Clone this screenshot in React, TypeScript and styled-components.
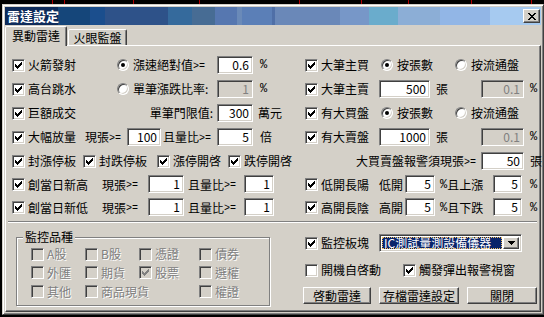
import React from "react";
import styled, { createGlobalStyle, css } from "styled-components";

const FACE = "#d4d0c8";
const SHADOW = "#808080";
const DARK = "#404040";

const ticks = [52, 64, 133, 199, 299, 361, 408, 471, 531];

const GlobalStyle = createGlobalStyle`
  html, body { margin: 0; padding: 0; }
  body {
    width: 544px;
    height: 317px;
    overflow: hidden;
    box-sizing: border-box;
    padding: 4px 0 0 2px;
    background-color: #000;
    background-image: ${ticks.map(() => "linear-gradient(#b00000, #b00000)").join(", ")};
    background-size: 1px 4px;
    background-repeat: no-repeat;
    background-position: ${ticks.map((x) => `${x}px 0`).join(", ")};
    font-family: "Noto Sans CJK TC", "Liberation Sans", sans-serif;
    font-size: 12px;
    line-height: 14px;
    color: #000;
  }
`;

const sunken = css`
  border-style: solid;
  border-width: 1px;
  border-color: ${SHADOW} #fff #fff ${SHADOW};
  box-shadow: inset 1px 1px 0 ${DARK}, inset -1px -1px 0 ${FACE};
`;

const raised = css`
  border-style: solid;
  border-width: 1px;
  border-color: #fff ${DARK} ${DARK} #fff;
  box-shadow: inset -1px -1px 0 ${SHADOW};
`;

const Window = styled.div`
  width: 542px;
  height: 311px;
  box-sizing: border-box;
  background: ${FACE};
  border: 1px solid;
  border-color: ${FACE} ${DARK} ${DARK} ${FACE};
  box-shadow: inset 1px 1px 0 #fff, inset -1px -1px 0 ${SHADOW};
  padding: 2px;
  display: flex;
  flex-direction: column;
`;

const TitleBar = styled.div`
  height: 18px;
  flex-shrink: 0;
  display: flex;
  align-items: center;
  justify-content: space-between;
  padding: 0 1px 0 2px;
  background: linear-gradient(
    to right,
    #0e2b5a 0 53px,
    #15467a 53px 85px,
    #1b4e8d 85px 100px,
    #2e5289 100px 163px,
    #356a9c 163px 187px,
    #476c94 187px 210px,
    #5677b0 210px 232px,
    #6a8ab8 232px 237px,
    #5b7fb7 237px 267px,
    #4f6fa7 267px 270px,
    #6a88b8 270px 335px,
    #7797c8 335px 364px,
    #6aaccc 364px 393px,
    #8caed6 393px 435px,
    #92b6e6 435px 485px,
    #a6caf0 485px
  );
`;

const TitleText = styled.span`
  color: #fff;
  font-weight: bold;
  font-size: 13px;
  line-height: 16px;
`;

const CloseButton = styled.div`
  width: 17px;
  height: 14px;
  box-sizing: border-box;
  background: ${FACE};
  ${raised};
  display: flex;
  align-items: center;
  justify-content: center;
`;

const TabStrip = styled.div`
  height: 20px;
  flex-shrink: 0;
  display: flex;
  align-items: flex-end;
`;

const Tab = styled.div<{ $active?: boolean }>`
  position: relative;
  z-index: 1;
  box-sizing: border-box;
  display: flex;
  align-items: center;
  justify-content: center;
  background: ${FACE};
  border-style: solid;
  border-width: 1px 1px 0 1px;
  border-color: #fff ${DARK} transparent #fff;
  border-radius: 2px 2px 0 0;
  box-shadow: inset -1px 0 0 ${SHADOW};
  width: ${(p) => (p.$active ? 62 : 59)}px;
  height: ${(p) => (p.$active ? 20 : 16)}px;
  margin-bottom: ${(p) => (p.$active ? -1 : 0)}px;
  margin-left: ${(p) => (p.$active ? 0 : 1)}px;
  padding-bottom: ${(p) => (p.$active ? 1 : 0)}px;
`;

const Panel = styled.div`
  flex: 1;
  box-sizing: border-box;
  border-style: solid;
  border-width: 1px;
  border-color: #fff ${DARK} ${DARK} #fff;
  box-shadow: inset -1px -1px 0 ${SHADOW};
  padding: 7px 2px 0 6px;
  display: flex;
  flex-direction: column;
`;

const TopGrid = styled.div`
  display: grid;
  grid-template-columns: 293px 1fr;
  grid-template-rows: 24px 24px 24px 24px 24px 23px 23px;
`;

const Row = styled.div`
  display: flex;
  align-items: center;
  white-space: nowrap;
`;

const Cell = styled.div<{ $w?: number; $end?: boolean; $pl?: number; $pr?: number; $ml?: number }>`
  display: flex;
  align-items: center;
  flex-shrink: 0;
  box-sizing: border-box;
  white-space: nowrap;
  ${(p) => (p.$w !== undefined ? `width: ${p.$w}px;` : "")}
  justify-content: ${(p) => (p.$end ? "flex-end" : "flex-start")};
  padding-left: ${(p) => p.$pl ?? 0}px;
  padding-right: ${(p) => p.$pr ?? 0}px;
  margin-left: ${(p) => p.$ml ?? 0}px;
`;

const Ascii = styled.span<{ $small?: boolean }>`
  font-family: "Liberation Mono", monospace;
  font-size: ${(p) => (p.$small ? 10 : 12)}px;
  padding-top: ${(p) => (p.$small ? 3 : 0)}px;
`;

const Label = styled.span<{ $disabled?: boolean }>`
  margin-left: 3px;
  color: ${(p) => (p.$disabled ? SHADOW : "#000")};
  text-shadow: ${(p) => (p.$disabled ? "1px 1px 0 #fff" : "none")};
`;

const Box = styled.span<{ $disabled?: boolean }>`
  width: 13px;
  height: 13px;
  flex-shrink: 0;
  box-sizing: border-box;
  ${sunken};
  background: ${(p) => (p.$disabled ? FACE : "#fff")};
  display: flex;
  align-items: center;
  justify-content: center;
`;

const RadioRing = styled.span<{ $on?: boolean }>`
  width: 12px;
  height: 12px;
  flex-shrink: 0;
  box-sizing: border-box;
  border-radius: 50%;
  ${sunken};
  background: #fff;
  display: flex;
  align-items: center;
  justify-content: center;
  &::after {
    content: "";
    width: 4px;
    height: 4px;
    border-radius: 50%;
    background: ${(p) => (p.$on ? "#000" : "transparent")};
  }
`;

const RadioLabel = styled.span`
  margin-left: 4px;
  display: flex;
  align-items: center;
`;

const TextBox = styled.div<{ $w: number; $disabled?: boolean }>`
  width: ${(p) => p.$w}px;
  height: 18px;
  box-sizing: border-box;
  flex-shrink: 0;
  ${sunken};
  background: ${(p) => (p.$disabled ? FACE : "#fff")};
  color: ${(p) => (p.$disabled ? SHADOW : "#000")};
  display: flex;
  align-items: center;
  justify-content: flex-end;
  padding-right: 3px;
  margin-top: -1px;
`;

const Separator = styled.div`
  height: 0;
  margin: 2px 1px 0 -4px;
  border-top: 1px solid ${SHADOW};
  border-bottom: 1px solid #fff;
`;

const Bottom = styled.div`
  display: flex;
  align-items: flex-start;
`;

const Group = styled.fieldset`
  margin: 7px 0 0 4px;
  padding: 0 0 0 14px;
  width: 254px;
  height: 76px;
  box-sizing: border-box;
  border: 1px solid ${SHADOW};
  box-shadow: inset 1px 1px 0 #fff, 1px 1px 0 #fff;
  min-width: 0;
`;

const Legend = styled.legend`
  margin-left: -8px;
  padding: 0 2px;
  background: ${FACE};
  line-height: 14px;
`;

const Kinds = styled.div`
  display: grid;
  grid-template-columns: 54px 54px 60px auto;
  grid-template-rows: 18px 19px 19px;
  margin-top: 1px;
`;

const RightCol = styled.div`
  margin: 11px 0 0 33px;
  display: flex;
  flex-direction: column;
`;

const Select = styled.div`
  width: 143px;
  height: 18px;
  box-sizing: border-box;
  ${sunken};
  background: #fff;
  display: flex;
  align-items: stretch;
  padding: 2px;
`;

const Selected = styled.div`
  flex: 1;
  background: #0a246a;
  color: #fff;
  outline: 1px dotted #f0c060;
  outline-offset: -1px;
  display: flex;
  align-items: center;
  padding-left: 2px;
  margin-right: 1px;
`;

const DropButton = styled.div`
  width: 16px;
  box-sizing: border-box;
  background: ${FACE};
  ${raised};
  display: flex;
  align-items: center;
  justify-content: center;
`;

const ButtonRow = styled.div`
  display: flex;
  gap: 8px;
  margin-top: 8px;
`;

const Button = styled.div<{ $w: number }>`
  width: ${(p) => p.$w}px;
  height: 17px;
  box-sizing: border-box;
  background: ${FACE};
  ${raised};
  display: flex;
  align-items: center;
  justify-content: center;
`;

const TickMark = ({ color }: { color: string }) => (
  <svg width="7" height="7" viewBox="0 0 7 7" shapeRendering="crispEdges">
    <path
      fill={color}
      d="M0 2h1v3H0z M1 3h1v3H1z M2 4h1v3H2z M3 3h1v3H3z M4 2h1v3H4z M5 1h1v3H5z M6 0h1v3H6z"
    />
  </svg>
);

type CheckProps = { label?: string; checked?: boolean; disabled?: boolean; w?: number };

const Check = ({ label, checked, disabled, w }: CheckProps) => (
  <Cell $w={w}>
    <Box $disabled={disabled}>{checked && <TickMark color={disabled ? SHADOW : "#000"} />}</Box>
    {label && <Label $disabled={disabled}>{label}</Label>}
  </Cell>
);

const Radio = ({ label, on, w }: { label: React.ReactNode; on?: boolean; w?: number }) => (
  <Cell $w={w}>
    <RadioRing $on={on} />
    <RadioLabel>{label}</RadioLabel>
  </Cell>
);

const Ge = () => <Ascii $small>&gt;=</Ascii>;
const Pct = () => <Ascii>%</Ascii>;

const App: React.FC = () => {
  return (
    <>
      <GlobalStyle />
      <Window>
        <TitleBar>
          <TitleText>雷達設定</TitleText>
          <CloseButton>
            <svg width="8" height="7" viewBox="0 0 8 7" shapeRendering="crispEdges">
              <path d="M0 0h2v1H0z M6 0h2v1H6z M1 1h2v1H1z M5 1h2v1H5z M2 2h4v1H2z M3 3h2v1H3z M2 4h4v1H2z M1 5h2v1H1z M5 5h2v1H5z M0 6h2v1H0z M6 6h2v1H6z" />
            </svg>
          </CloseButton>
        </TitleBar>
        <TabStrip>
          <Tab $active>異動雷達</Tab>
          <Tab>火眼監盤</Tab>
        </TabStrip>
        <Panel>
          <TopGrid>
            <Row>
              <Check w={105} label="火箭發射" checked />
              <Radio w={100} label={<>漲速絕對值<Ge /></>} on />
              <TextBox $w={36}>0.6</TextBox>
              <Cell $ml={7}><Pct /></Cell>
            </Row>
            <Row>
              <Check w={76} label="大筆主買" checked />
              <Radio w={74} label="按張數" on />
              <Radio label="按流通盤" />
            </Row>

            <Row>
              <Check w={105} label="高台跳水" checked />
              <Radio w={100} label="單筆漲跌比率:" />
              <TextBox $w={36} $disabled>1</TextBox>
              <Cell $ml={7}><Pct /></Cell>
            </Row>
            <Row>
              <Check w={74} label="大筆主賣" checked />
              <TextBox $w={51}>500</TextBox>
              <Cell $w={51} $pl={6}>張</Cell>
              <TextBox $w={43} $disabled>0.1</TextBox>
              <Cell $ml={6}><Pct /></Cell>
            </Row>

            <Row>
              <Check w={105} label="巨額成交" checked />
              <Cell $w={100} $end $pr={4}>單筆門限值:</Cell>
              <TextBox $w={36}>300</TextBox>
              <Cell $ml={5}>萬元</Cell>
            </Row>
            <Row>
              <Check w={76} label="有大買盤" checked />
              <Radio w={74} label="按張數" on />
              <Radio label="按流通盤" />
            </Row>

            <Row>
              <Check w={73} label="大幅放量" checked />
              <Cell $w={42}>現張<Ge /></Cell>
              <TextBox $w={34}>100</TextBox>
              <Cell $w={54} $ml={2}>且量比<Ge /></Cell>
              <TextBox $w={36}>5</TextBox>
              <Cell $ml={7}>倍</Cell>
            </Row>
            <Row>
              <Check w={74} label="有大賣盤" checked />
              <TextBox $w={51}>1000</TextBox>
              <Cell $w={51} $pl={6}>張</Cell>
              <TextBox $w={43} $disabled>0.1</TextBox>
              <Cell $ml={6}><Pct /></Cell>
            </Row>

            <Row>
              <Check w={71} label="封漲停板" checked />
              <Check w={74} label="封跌停板" checked />
              <Check w={71} label="漲停開啓" checked />
              <Check label="跌停開啓" checked />
            </Row>
            <Row>
              <Cell $w={176} $end $pr={5}>大買賣盤報警須現張<Ge /></Cell>
              <TextBox $w={43}>50</TextBox>
              <Cell $ml={6}>張</Cell>
            </Row>

            <Row>
              <Check w={90} label="創當日新高" checked />
              <Cell $w={46}>現張<Ge /></Cell>
              <TextBox $w={36}>1</TextBox>
              <Cell $w={56} $ml={4}>且量比<Ge /></Cell>
              <TextBox $w={30}>1</TextBox>
            </Row>
            <Row>
              <Check w={74} label="低開長陽" checked />
              <Cell $w={26}>低開</Cell>
              <TextBox $w={30}>5</TextBox>
              <Cell $w={58} $pl={5}><Pct />且上漲</Cell>
              <TextBox $w={29}>5</TextBox>
              <Cell $ml={8}><Pct /></Cell>
            </Row>

            <Row>
              <Check w={90} label="創當日新低" checked />
              <Cell $w={46}>現張<Ge /></Cell>
              <TextBox $w={36}>1</TextBox>
              <Cell $w={56} $ml={4}>且量比<Ge /></Cell>
              <TextBox $w={30}>1</TextBox>
            </Row>
            <Row>
              <Check w={74} label="高開長陰" checked />
              <Cell $w={26}>高開</Cell>
              <TextBox $w={30}>5</TextBox>
              <Cell $w={58} $pl={5}><Pct />且下跌</Cell>
              <TextBox $w={29}>5</TextBox>
              <Cell $ml={8}><Pct /></Cell>
            </Row>
          </TopGrid>

          <Separator />

          <Bottom>
            <Group>
              <Legend>監控品種</Legend>
              <Kinds>
                <Check label="A股" disabled />
                <Check label="B股" disabled />
                <Check label="憑證" disabled />
                <Check label="債券" disabled />
                <Check label="外匯" disabled />
                <Check label="期貨" disabled />
                <Check label="股票" disabled checked />
                <Check label="選權" disabled />
                <Check label="其他" disabled />
                <Check label="商品現貨" disabled />
                <span />
                <Check label="權證" disabled />
              </Kinds>
            </Group>

            <RightCol>
              <Row>
                <Cell $pl={2}>
                  <Check w={74} label="監控板塊" checked />
                </Cell>
                <Select>
                  <Selected>IC測試量測設備儀器</Selected>
                  <DropButton>
                    <svg width="7" height="4" viewBox="0 0 7 4" shapeRendering="crispEdges">
                      <path d="M0 0h7v1H0z M1 1h5v1H1z M2 2h3v1H2z M3 3h1v1H3z" />
                    </svg>
                  </DropButton>
                </Select>
              </Row>
              <Row style={{ marginTop: 9, height: 18 }}>
                <Cell $pl={2}>
                  <Check w={98} label="開機自啓動" />
                  <Check label="觸發彈出報警視窗" checked />
                </Cell>
              </Row>
              <ButtonRow>
                <Button $w={68}>啓動雷達</Button>
                <Button $w={80}>存檔雷達設定</Button>
                <Button $w={70}>關閉</Button>
              </ButtonRow>
            </RightCol>
          </Bottom>
        </Panel>
      </Window>
    </>
  );
};

export default App;
